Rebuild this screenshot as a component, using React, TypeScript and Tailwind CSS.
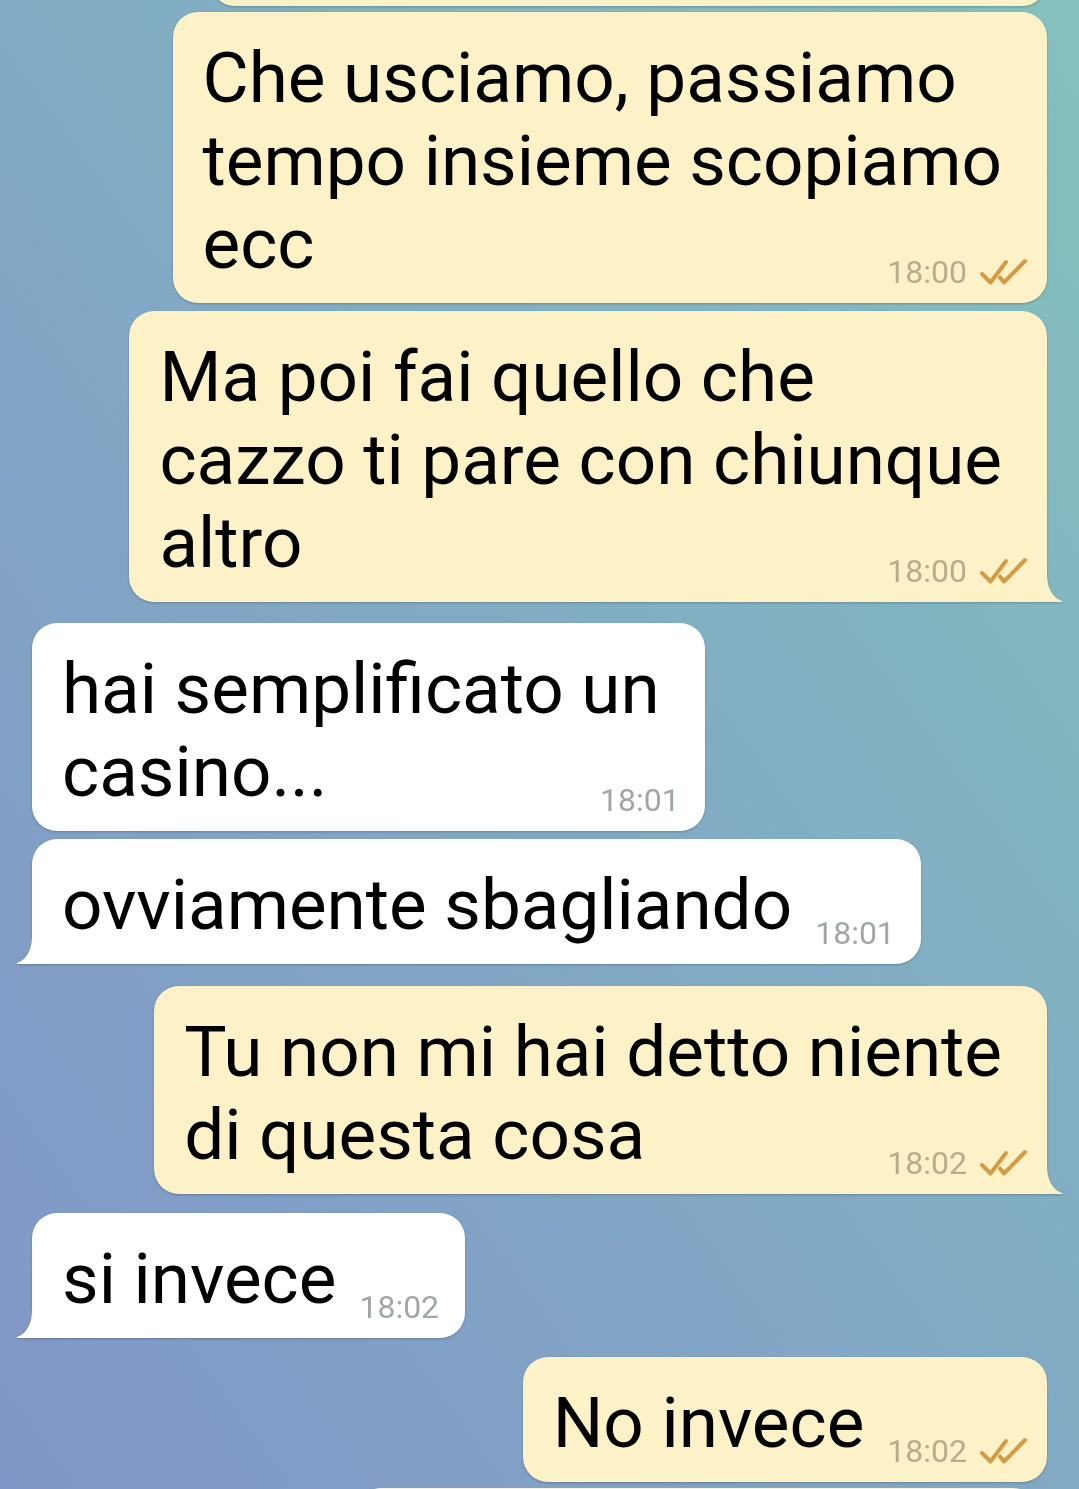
import { Fragment } from "react";

type Msg = {
  out: boolean;
  lines: string[];
  time: string;
  tail: boolean;
  mt: string;
};

const messages: Msg[] = [
  { out: true, lines: ["Che usciamo, passiamo", "tempo insieme scopiamo", "ecc"], time: "18:00", tail: false, mt: "mt-[6px]" },
  { out: true, lines: ["Ma poi fai quello che", "cazzo ti pare con chiunque", "altro"], time: "18:00", tail: true, mt: "mt-[8px]" },
  { out: false, lines: ["hai semplificato un", "casino..."], time: "18:01", tail: false, mt: "mt-[21px]" },
  { out: false, lines: ["ovviamente sbagliando"], time: "18:01", tail: true, mt: "mt-[8px]" },
  { out: true, lines: ["Tu non mi hai detto niente", "di questa cosa"], time: "18:02", tail: true, mt: "mt-[22px]" },
  { out: false, lines: ["si invece"], time: "18:02", tail: true, mt: "mt-[19px]" },
  { out: true, lines: ["No invece"], time: "18:02", tail: false, mt: "mt-[19px]" },
];

function Checks() {
  return (
    <svg width="49" height="28" viewBox="0 0 49 28" fill="none" className="shrink-0">
      <path d="M3 16 L11.5 24.5 L27 4" stroke="#d69a47" strokeWidth="4" strokeLinecap="round" strokeLinejoin="round" />
      <path d="M21 19.5 L25 24.5 L46 3" stroke="#d69a47" strokeWidth="4" strokeLinecap="round" strokeLinejoin="round" />
    </svg>
  );
}

function Time({ out, time }: { out: boolean; time: string }) {
  return (
    <span
      className={`flex items-center gap-[12px] text-[32px] leading-none -mb-[3px] whitespace-nowrap ${
        out ? "text-[#b8ac8c]" : "text-[#a0a7a8]"
      }`}
    >
      {time}
      {out && <Checks />}
    </span>
  );
}

function Tail({ out }: { out: boolean }) {
  if (out) {
    return (
      <svg
        width="17"
        height="28"
        viewBox="0 0 17 28"
        className="absolute bottom-0 right-[-16px]"
      >
        <path d="M0 0 L1 0 C1 14 7 24 15 26.5 C17 27 17 28 15 28 L0 28 Z" fill="#fcf1c7" />
      </svg>
    );
  }
  return (
    <svg
      width="17"
      height="28"
      viewBox="0 0 17 28"
      className="absolute bottom-0 left-[-16px]"
    >
      <path d="M17 0 L16 0 C16 14 10 24 2 26.5 C0 27 0 28 2 28 L17 28 Z" fill="#ffffff" />
    </svg>
  );
}

function Bubble({ m }: { m: Msg }) {
  const color = m.out ? "bg-[#fcf1c7]" : "bg-white";
  const side = m.out ? "self-end" : "self-start";
  const corner = m.tail ? (m.out ? "rounded-br-none" : "rounded-bl-none") : "";
  const base = `relative ${m.mt} ${side} ${color} rounded-[25px] ${corner} pt-[24px] pb-[18px] drop-shadow-[0_1px_1px_rgba(0,0,0,0.22)]`;

  if (m.lines.length > 1) {
    return (
      <div className={`${base} pl-[30px] pr-[45px]`}>
        <div className="grid">
          <p className="col-start-1 row-start-1 text-[71px] leading-[83px] text-black whitespace-nowrap">
            {m.lines.map((l, i) => (
              <Fragment key={i}>
                {l}
                {i < m.lines.length - 1 && <br />}
              </Fragment>
            ))}
          </p>
          <div
            className={`col-start-1 row-start-1 self-end justify-self-end ${
              m.out ? "-mr-[26px]" : "-mr-[20px]"
            }`}
          >
            <Time out={m.out} time={m.time} />
          </div>
        </div>
        {m.tail && <Tail out={m.out} />}
      </div>
    );
  }

  return (
    <div className={`${base} flex items-end pl-[30px] ${m.out ? "pr-[19px]" : "pr-[26px]"}`}>
      <p className="text-[71px] leading-[83px] text-black whitespace-nowrap">{m.lines[0]}</p>
      <div className="ml-[23px]">
        <Time out={m.out} time={m.time} />
      </div>
      {m.tail && <Tail out={m.out} />}
    </div>
  );
}

export default function App() {
  return (
    <div className="h-[1489px] w-full overflow-hidden font-[Roboto,'Noto_Sans',sans-serif] bg-[linear-gradient(to_bottom_left,#84c1bd_0%,#81aac4_50%,#8196c8_100%)]">
      <div className="flex flex-col px-[32px]">
        {/* previous message, cut off at the top */}
        <div className="-mt-[40px] h-[46px] w-[833px] self-end mr-[2px] rounded-[22px] bg-[#fcf1c7] drop-shadow-[0_1px_1px_rgba(0,0,0,0.22)]" />

        {messages.map((m, i) => (
          <Bubble key={i} m={m} />
        ))}

        {/* next message, just peeking in at the bottom */}
        <div className="mt-[6px] h-[60px] w-[676px] self-end mr-[12px] rounded-[22px] bg-[#fcf4d2]" />
      </div>
    </div>
  );
}
